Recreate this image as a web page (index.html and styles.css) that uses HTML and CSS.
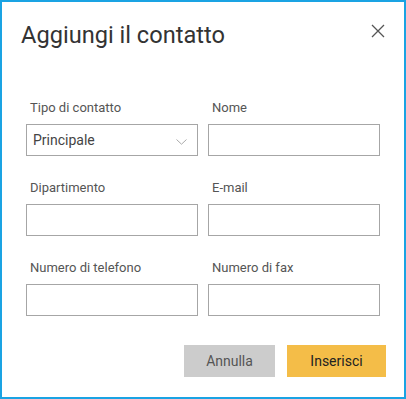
FILE: index.html
```html
<!DOCTYPE html>
<html lang="it">
<head>
<meta charset="utf-8">
<title>Aggiungi il contatto</title>
<link rel="stylesheet" href="styles.css">
</head>
<body>
<div class="dialog">
  <div class="header">
    <h1 class="title">Aggiungi il contatto</h1>
    <button class="close" aria-label="Chiudi">
      <svg width="14" height="14" viewBox="0 0 14 14"><path d="M1 1 L13 13 M13 1 L1 13" stroke="#555" stroke-width="1.3" fill="none"/></svg>
    </button>
  </div>
  <div class="form">
    <div class="field">
      <label class="label">Tipo di contatto</label>
      <div class="select">
        <span class="select-text">Principale</span>
        <svg class="chevron" width="11" height="6" viewBox="0 0 11 6"><path d="M0.5 0.5 L5.5 5.2 L10.5 0.5" stroke="#aaa" stroke-width="1" fill="none"/></svg>
      </div>
    </div>
    <div class="field">
      <label class="label">Nome</label>
      <input class="input" type="text">
    </div>
    <div class="field">
      <label class="label">Dipartimento</label>
      <input class="input" type="text">
    </div>
    <div class="field">
      <label class="label">E-mail</label>
      <input class="input" type="text">
    </div>
    <div class="field">
      <label class="label">Numero di telefono</label>
      <input class="input" type="text">
    </div>
    <div class="field">
      <label class="label">Numero di fax</label>
      <input class="input" type="text">
    </div>
  </div>
  <div class="footer">
    <button class="btn btn-cancel">Annulla</button>
    <button class="btn btn-primary">Inserisci</button>
  </div>
</div>
</body>
</html>
```
FILE: styles.css
```css
* { box-sizing: border-box; }
html, body { margin: 0; padding: 0; background: #fff; }
body { font-family: Roboto, "Noto Sans", sans-serif; }
.dialog {
  width: 406px;
  height: 399px;
  border: 2px solid #1aa3e3;
  background: #fff;
}
.header {
  display: flex;
  justify-content: space-between;
  align-items: flex-start;
  padding: 19px 19px 0 19px;
  height: 98px;
}
.title {
  margin: 0;
  font-size: 23.6px;
  font-weight: 400;
  line-height: 28px;
  color: #333;
}
.close {
  border: none;
  background: none;
  padding: 0;
  margin-top: 3px;
  width: 14px;
  height: 14px;
  cursor: pointer;
}
.close svg { display: block; }
.form {
  display: grid;
  grid-template-columns: 172px 172px;
  column-gap: 10px;
  row-gap: 24px;
  padding-left: 24px;
}
.field { display: flex; flex-direction: column; }
.label {
  font-size: 13px;
  line-height: 16px;
  color: #555;
  padding-left: 4px;
  margin-bottom: 8px;
}
.input, .select {
  height: 32px;
  width: 172px;
  border: 1px solid #a6a6a6;
  background: #fff;
  margin: 0;
  outline: none;
}
.select {
  display: flex;
  align-items: center;
  justify-content: space-between;
  padding: 0 10px 0 6px;
}
.select-text { font-size: 14px; color: #444; }
.chevron { display: block; margin-top: 3px; }
.footer {
  display: flex;
  justify-content: flex-end;
  gap: 12px;
  padding: 29px 18px 0 0;
}
.btn {
  height: 32px;
  border: none;
  font-family: Roboto, "Noto Sans", sans-serif;
  font-size: 14px;
  padding: 0;
}
.btn-cancel { width: 91px; background: #cccccc; color: #555; }
.btn-primary { width: 99px; background: #f4bd48; color: #222; }
```
